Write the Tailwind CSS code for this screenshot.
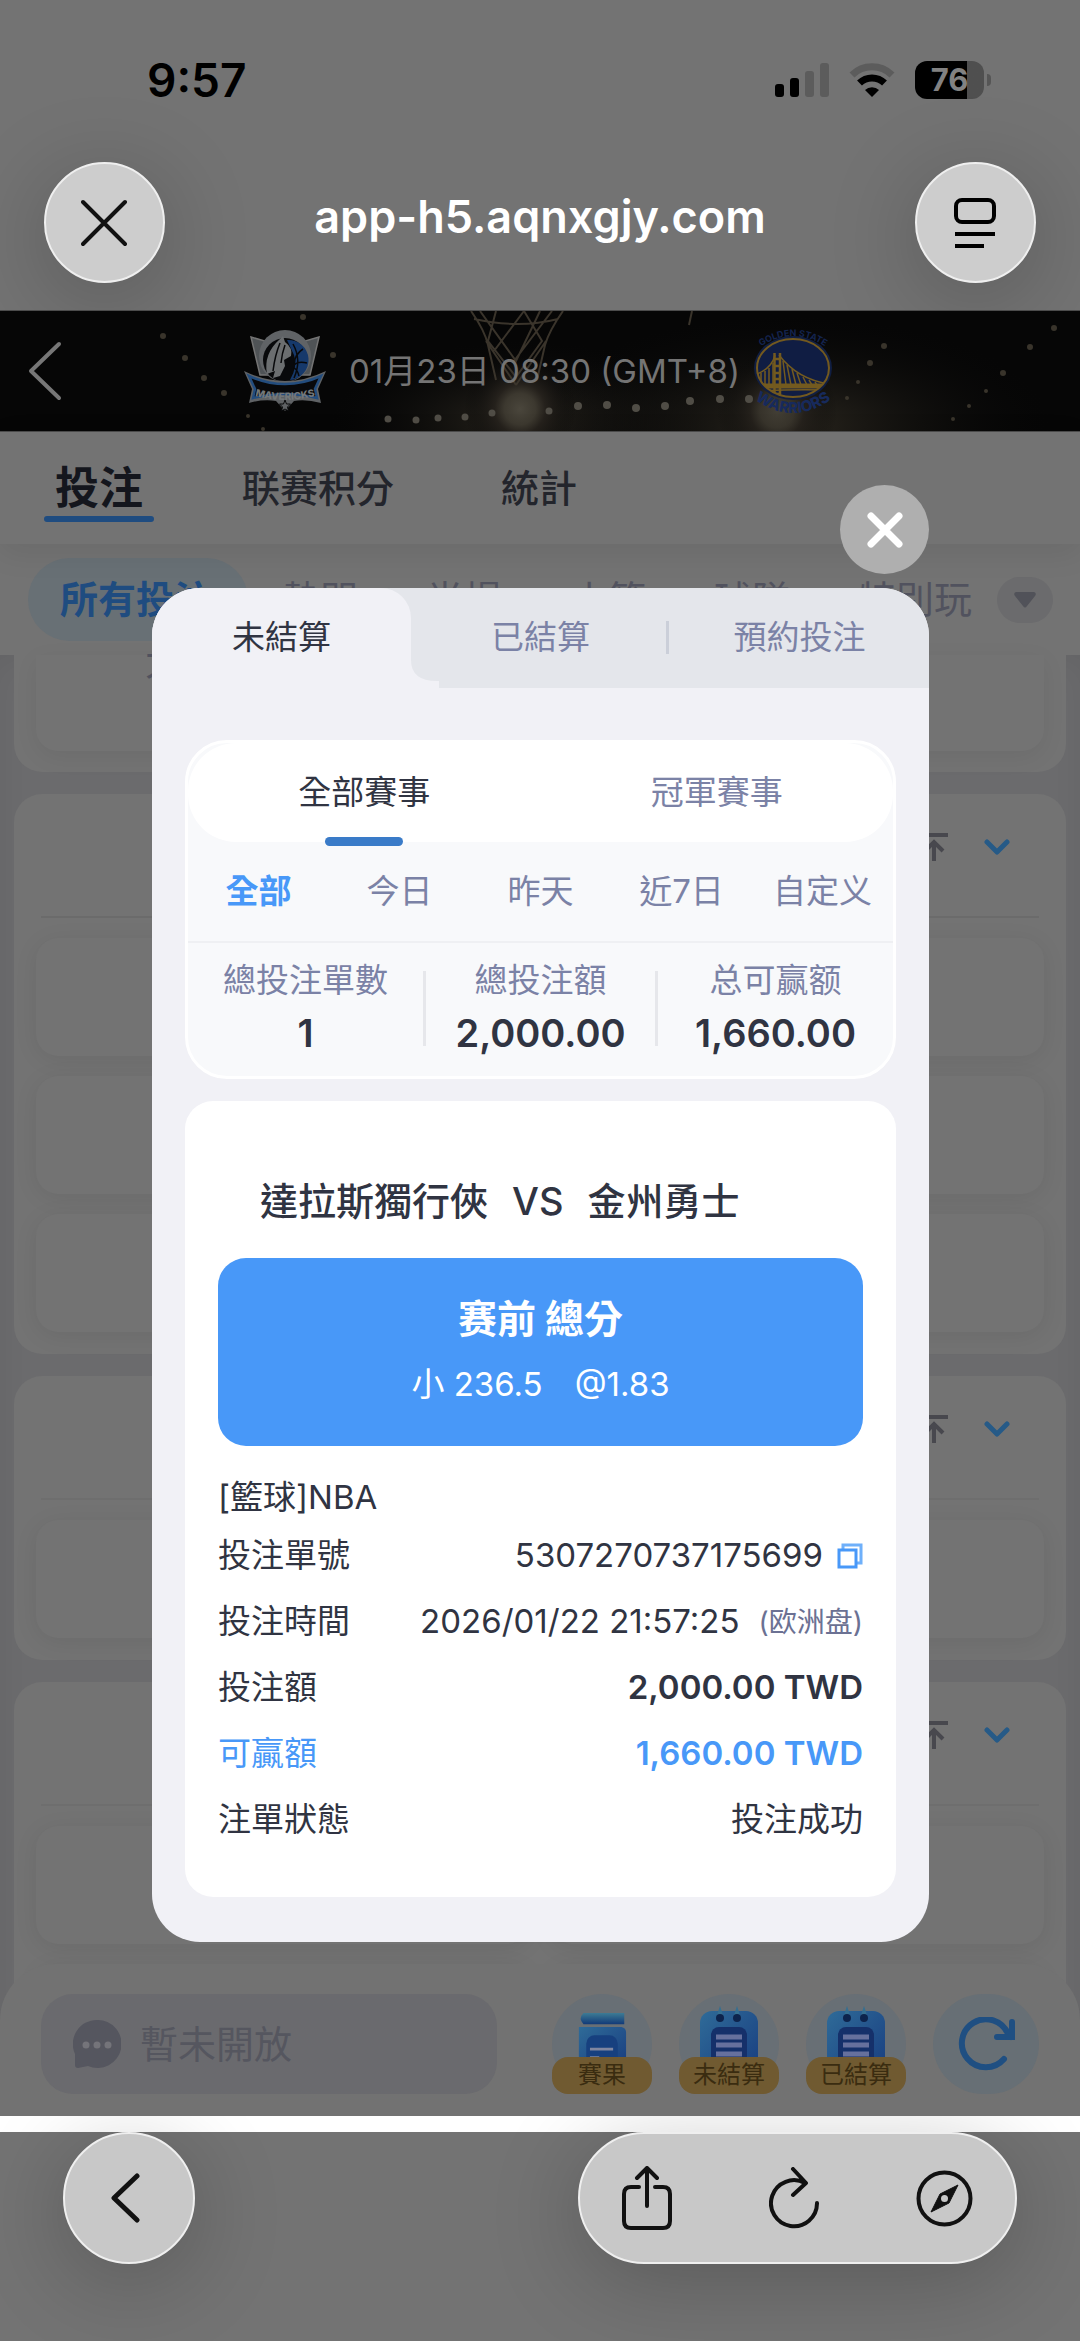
<!DOCTYPE html>
<html lang="zh-Hant">
<head>
<meta charset="utf-8">
<meta name="viewport" content="width=device-width, initial-scale=1">
<title>app-h5.aqnxgjy.com</title>
<script src="https://cdn.jsdelivr.net/npm/@tailwindcss/browser@4"></script>
</head>
<body class="relative min-h-screen overflow-x-hidden bg-[#737373] font-['Inter','Noto_Sans_CJK_TC',sans-serif] text-[33px] text-[#303442]">

<!-- Browser chrome, top -->
<header class="px-11 pt-[52px] pb-[27px]">
  <div class="flex h-14 items-center justify-between pr-[45px] pl-[103px]">
    <span class="text-[46px] leading-[56px] font-semibold text-black">9:57</span>
    <div class="flex items-center gap-5">
      <svg class="h-[34px] w-[54px]" viewBox="0 0 54 34" aria-hidden="true">
        <rect x="0" y="21" width="9" height="13" rx="3"/><rect x="15" y="15" width="9" height="19" rx="3"/>
        <rect x="30" y="8" width="9" height="26" rx="3" fill="#5c5c5c"/><rect x="45" y="0" width="9" height="34" rx="3" fill="#5c5c5c"/>
      </svg>
      <svg class="h-[34px] w-[46px]" viewBox="0 0 46 34" aria-hidden="true">
        <path d="M3 12a28.500 28.500 0 0 1 40 0" fill="none" stroke="#5c5c5c" stroke-width="7"/>
        <path d="M10.500 20a18 18 0 0 1 25 0" fill="none" stroke="#000" stroke-width="7"/>
        <path d="M16 27a10 10 0 0 1 14 0l-7 7z"/>
      </svg>
      <div class="flex items-center gap-[3px]">
        <div class="flex h-[38px] w-[69px] items-center justify-center rounded-[12px] bg-linear-to-r from-black from-75% to-[#4f4f4f] to-75% text-[31px] leading-[38px] font-bold text-[#828282]">76</div>
        <div class="h-3 w-[4px] rounded-r-full bg-[#555]"></div>
      </div>
    </div>
  </div>
  <div class="mt-[54px] flex items-center justify-between">
    <button class="flex size-[121px] items-center justify-center rounded-full border-2 border-[#efefef] bg-[#cdcdcd] shadow-[0_16px_90px_rgba(0,0,0,0.22)]" aria-label="關閉">
      <svg class="size-12" viewBox="0 0 48 48" fill="none" stroke="#111" stroke-width="4" stroke-linecap="round"><path d="M2 3l42 42M44 3L2 45"/></svg>
    </button>
    <h1 class="pb-3 text-[45px] leading-[56px] font-semibold text-white">app-h5.aqnxgjy.com</h1>
    <button class="flex size-[121px] items-center justify-center rounded-full border-2 border-[#efefef] bg-[#cdcdcd] shadow-[0_16px_90px_rgba(0,0,0,0.22)]" aria-label="閱讀模式">
      <svg class="h-[50px] w-[42px]" viewBox="0 0 42 50" fill="none" stroke="#000" stroke-width="4"><rect x="2" y="2" width="38" height="22" rx="6"/><path d="M1 36h40M1 48h29"/></svg>
    </button>
  </div>
</header>

<!-- Match banner -->
<section class="relative h-[122px] overflow-hidden border-y border-[#4c4c4c] bg-[#060606]">
  <svg class="absolute inset-0 size-full" viewBox="0 0 1080 120" preserveAspectRatio="xMidYMid slice" aria-hidden="true">
    <defs>
      <radialGradient id="lamp"><stop offset="0" stop-color="#4a463c"/><stop offset=".28" stop-color="#3c382f"/><stop offset=".45" stop-color="#25211c"/><stop offset="1" stop-color="#060606" stop-opacity="0"/></radialGradient>
      <radialGradient id="haze"><stop offset="0" stop-color="#2c2820"/><stop offset="1" stop-color="#090909" stop-opacity="0"/></radialGradient>
    </defs>
    <ellipse cx="520" cy="110" rx="190" ry="80" fill="url(#haze)"/>
    <ellipse cx="790" cy="115" rx="260" ry="110" fill="url(#haze)"/>
    <circle cx="520" cy="98" r="56" fill="url(#lamp)"/>
    <circle cx="777" cy="100" r="60" fill="url(#lamp)" opacity=".8"/>
    <g fill="none" stroke="#3a342b" stroke-width="2">
      <path d="M471 0q14 20 17 34l8 35M563 0q-14 20-18 34l-8 35M480 0l36 50 24-50M496 0l-8 30 28 36 26-36L524 0l-30 40M552 0l-38 50M474 8q45 10 84 0M486 30l30 44M546 30l-30 44"/>
    </g>
    <path d="M692 0l-3 14" stroke="#3a342b" stroke-width="2"/>
    <g fill="#504d46">
      <circle cx="388" cy="108" r="3.500"/><circle cx="416" cy="109" r="3.500"/><circle cx="438" cy="107" r="3.500"/><circle cx="465" cy="106" r="3.500"/><circle cx="492" cy="102" r="3.500"/><circle cx="549" cy="100" r="3.500"/><circle cx="578" cy="95" r="4"/><circle cx="607" cy="94" r="4"/><circle cx="636" cy="97" r="4"/><circle cx="665" cy="95" r="4"/><circle cx="690" cy="90" r="4"/><circle cx="720" cy="88" r="4"/><circle cx="749" cy="88" r="4"/>
    </g>
    <g fill="#39342b">
      <circle cx="303" cy="6" r="3"/><circle cx="163" cy="25" r="3"/><circle cx="185" cy="47" r="3"/><circle cx="204" cy="67" r="3"/><circle cx="224" cy="82" r="3"/><circle cx="333" cy="44" r="3"/><circle cx="248" cy="105" r="2"/><circle cx="263" cy="118" r="2"/>
      <circle cx="884" cy="35" r="3"/><circle cx="870" cy="52" r="3"/><circle cx="858" cy="71" r="2"/><circle cx="847" cy="87" r="2"/><circle cx="1054" cy="17" r="3"/><circle cx="1030" cy="36" r="3"/><circle cx="1003" cy="62" r="3"/><circle cx="986" cy="80" r="2"/><circle cx="969" cy="95" r="2"/><circle cx="953" cy="108" r="2"/>
    </g>
  </svg>
  <div class="relative flex h-full items-center justify-center">
    <a href="#" class="absolute left-7" aria-label="返回">
      <svg class="h-[60px] w-[36px]" viewBox="0 0 36 60" fill="none" stroke="#777" stroke-width="4" stroke-linecap="round" stroke-linejoin="round"><path d="M31 3L3 30l28 27"/></svg>
    </a>
    <svg class="mr-[22px] h-[84px] w-[84px]" viewBox="0 0 84 84" role="img" aria-label="Mavericks">
      <defs><path id="ribbon" d="M9 66Q42 76 75 66"/></defs>
      <path d="M8 8l14 4 7 34H17zM76 8l-14 4-7 34h12z" fill="#4f5356" stroke="#747474" stroke-width="1.500"/>
      <circle cx="42" cy="27" r="26" fill="#606366"/>
      <circle cx="42" cy="31" r="22" fill="#08090b"/>
      <path d="M44 11a20 20 0 0 1 3 40q8-14 4-25z" fill="#16396b"/>
      <path d="M50 15q9 16 1 34M60 20q-8 5-9 15M64 34q-9-2-13 2M56 47q-2-8-6-8" stroke="#08090b" stroke-width="1.500" fill="none"/>
      <path d="M37 10l3-3 2 6q8 6 6 14l-7 4 1 6-5 10-7 2 2-7-8 3q-4-20 13-35z" fill="#6b6e70"/>
      <path d="M37 14q-5 12-7 28M42 16q-3 8-4 18" stroke="#08090b" stroke-width="1.500" fill="none"/>
      <path d="M1 42q41 20 82 0l-8 18 3 14q-15-4-27-2l-9 10-9-10q-13-2-27 2l3-14z" fill="#5f6265"/>
      <path d="M6 47q36 16 72 0l-6 13 2 9q-32-8-64 0l2-9z" fill="#08090b" stroke="#234d7e" stroke-width="2.500"/>
      <text font-size="10" font-weight="800" fill="#74787a"><textPath href="#ribbon" startOffset="50%" text-anchor="middle">MAVERICKS</textPath></text>
      <path d="M42 71l1.500 4h4l-3 3 1 4-3.500-2-3.500 2 1-4-3-3h4z" fill="#5f6265" stroke="#08090b"/>
    </svg>
    <span class="text-[33px] leading-[44px] text-[#747474]">01月23日 08:30 (GMT+8)</span>
    <svg class="ml-[9px] h-[86px] w-[88px] overflow-visible" viewBox="0 0 88 86" role="img" aria-label="Golden State Warriors">
      <defs><path id="arcTop" d="M2 26Q44 -10 86 26"/><path id="arcBottom" d="M0 67Q44 103 88 67"/><clipPath id="disc"><ellipse cx="44" cy="40" rx="36" ry="29"/></clipPath></defs>
      <ellipse cx="44" cy="40" rx="39" ry="32" fill="#101e42"/>
      <ellipse cx="44" cy="40" rx="36" ry="29" fill="#101d43" stroke="#73591f" stroke-width="2"/>
      <g clip-path="url(#disc)" stroke="#735a1f" fill="none" stroke-width="1.500">
        <path d="M8 46q15-6 18-19M30 27q18 24 50 29"/>
        <path d="M24 35v22M20 40v17M16 43v14M12 45v12M34 33l3 24M38 37l4 20M43 41l4 16M48 45l4 12M54 49l4 8M60 52l3 5M66 54l2 3"/>
        <path d="M6 58h76" stroke-width="5"/><path d="M6 63q38-2 74-1"/>
        <path d="M25.500 25v46M31 25v46M25 31h7M25 38h7M25 45h7M25 51h7M25 66h7" stroke-width="2.500"/>
      </g>
      <text font-size="9" font-weight="700" fill="#142450"><textPath href="#arcTop" startOffset="50%" text-anchor="middle">GOLDEN STATE</textPath></text>
      <text font-size="15" font-weight="800" fill="#172a5c"><textPath href="#arcBottom" startOffset="50%" text-anchor="middle">WARRIORS</textPath></text>
    </svg>
  </div>
</section>

<!-- Section tabs -->
<nav class="relative flex h-28 items-center pl-11 text-[38px] font-medium text-[#23252c] shadow-[0_8px_30px_rgba(0,0,0,0.08)]">
  <a href="#" class="relative flex h-full w-[110px] items-center justify-center text-[44px] font-bold text-[#14161d]">投注<span class="absolute inset-x-0 bottom-[22px] h-[6px] rounded-full bg-[#1f4c80]"></span></a>
  <a href="#" class="ml-[88px]">联赛积分</a>
  <a href="#" class="ml-[107px]">統計</a>
</nav>
<div class="flex h-[111px] items-center justify-between pr-[27px] pl-7 text-[38px] text-[#51525e]">
  <div class="flex min-w-0 items-center overflow-hidden whitespace-nowrap">
    <button class="h-[83px] w-[220px] shrink-0 rounded-full bg-[#687075] pr-1 font-bold text-[#1f4c80]">所有投注</button>
    <div class="flex gap-[68px] pl-[34px]">
      <button>熱門</button><button>半場</button><button>小節</button><button>球隊</button><button>特別玩</button>
    </div>
  </div>
  <button class="ml-6 flex h-[46px] w-14 shrink-0 items-center justify-center rounded-full bg-[#6b6b6d]" aria-label="展開"><svg class="h-4 w-[22px]" viewBox="0 0 22 16" fill="#515259"><path d="M2 0h18q3 1 1 4l-8 10q-2 3-4 0L1 4q-2-3 1-4z"/></svg></button>
</div>

<!-- Market list -->
<main class="flex flex-col gap-[22px] bg-[#6b6b6d] px-[14px] text-[38px] text-[#51525e] shadow-[inset_0_10px_30px_rgba(0,0,0,0.06)]">
  <section class="rounded-b-[28px] bg-[#737373] px-[22px] pb-[21px]">
    <div class="flex h-24 rounded-b-[22px] px-[109px] shadow-[0_6px_24px_rgba(0,0,0,0.06)]"><span class="-mt-4 leading-[44px]">大</span></div>
  </section>

  <section class="rounded-[28px] bg-[#737373] px-[22px] pb-[22px]">
    <div class="mx-[5px] flex h-[124px] items-center justify-end gap-9 border-b-2 border-[#6b6b6b] pr-[29px] pb-4">
      <svg class="size-7" viewBox="0 0 28 28" fill="none" stroke="#48484e" stroke-width="4"><path d="M0 2h28M14 28V9M5 18l9-9 9 9"/></svg>
      <svg class="h-4 w-[26px]" viewBox="0 0 26 16" fill="none" stroke="#265a87" stroke-width="5" stroke-linecap="round" stroke-linejoin="round"><path d="M3 3l10 10L23 3"/></svg>
    </div>
    <div class="grid grid-cols-2 gap-5 pt-5">
      <div class="h-[118px] rounded-[22px] bg-[#737373] shadow-[0_4px_24px_rgba(0,0,0,0.07)]"></div><div class="h-[118px] rounded-[22px] bg-[#737373] shadow-[0_4px_24px_rgba(0,0,0,0.07)]"></div>
      <div class="h-[118px] rounded-[22px] bg-[#737373] shadow-[0_4px_24px_rgba(0,0,0,0.07)]"></div><div class="h-[118px] rounded-[22px] bg-[#737373] shadow-[0_4px_24px_rgba(0,0,0,0.07)]"></div>
      <div class="h-[118px] rounded-[22px] bg-[#737373] shadow-[0_4px_24px_rgba(0,0,0,0.07)]"></div><div class="h-[118px] rounded-[22px] bg-[#737373] shadow-[0_4px_24px_rgba(0,0,0,0.07)]"></div>
    </div>
  </section>

  <section class="rounded-[28px] bg-[#737373] px-[22px] pb-[22px]">
    <div class="mx-[5px] flex h-[124px] items-center justify-end gap-9 border-b-2 border-[#6e6e6e] pr-[29px] pb-4">
      <svg class="size-7" viewBox="0 0 28 28" fill="none" stroke="#48484e" stroke-width="4"><path d="M0 2h28M14 28V9M5 18l9-9 9 9"/></svg>
      <svg class="h-4 w-[26px]" viewBox="0 0 26 16" fill="none" stroke="#265a87" stroke-width="5" stroke-linecap="round" stroke-linejoin="round"><path d="M3 3l10 10L23 3"/></svg>
    </div>
    <div class="grid grid-cols-2 gap-5 pt-5">
      <div class="h-[118px] rounded-[22px] bg-[#737373] shadow-[0_4px_24px_rgba(0,0,0,0.07)]"></div><div class="h-[118px] rounded-[22px] bg-[#737373] shadow-[0_4px_24px_rgba(0,0,0,0.07)]"></div>
    </div>
  </section>

  <section class="rounded-t-[28px] bg-[#737373] px-[22px]">
    <div class="mx-[5px] flex h-[124px] items-center justify-end gap-9 border-b-2 border-[#6e6e6e] pr-[29px] pb-4">
      <svg class="size-7" viewBox="0 0 28 28" fill="none" stroke="#48484e" stroke-width="4"><path d="M0 2h28M14 28V9M5 18l9-9 9 9"/></svg>
      <svg class="h-4 w-[26px]" viewBox="0 0 26 16" fill="none" stroke="#265a87" stroke-width="5" stroke-linecap="round" stroke-linejoin="round"><path d="M3 3l10 10L23 3"/></svg>
    </div>
    <div class="grid grid-cols-2 gap-5 pt-5">
      <div class="h-[118px] rounded-[22px] bg-[#737373] shadow-[0_4px_24px_rgba(0,0,0,0.07)]"></div><div class="h-[118px] rounded-[22px] bg-[#737373] shadow-[0_4px_24px_rgba(0,0,0,0.07)]"></div>
      <div class="h-14 rounded-t-[22px] bg-[#737373] shadow-[0_4px_24px_rgba(0,0,0,0.07)]"></div><div class="h-14 rounded-t-[22px] bg-[#737373] shadow-[0_4px_24px_rgba(0,0,0,0.07)]"></div>
    </div>
  </section>
</main>

<!-- Page action bar -->
<footer class="relative -mt-14 flex items-start justify-between rounded-t-[56px] bg-[#727272] px-[41px] pt-[30px] pb-[22px]">
  <label class="flex h-[100px] w-[456px] items-center gap-[19px] rounded-[32px] bg-[#6a6a6e] pl-8">
    <svg class="size-12 shrink-0" viewBox="0 0 48 48" fill="#55565f"><path d="M24 0a24 24 0 1 1-9 46L5 48q-3 0-3-3V34A24 24 0 0 1 24 0z"/><g fill="#74747a"><circle cx="13" cy="25" r="3.500"/><circle cx="24" cy="25" r="3.500"/><circle cx="35" cy="25" r="3.500"/></g></svg>
    <input type="text" placeholder="暫未開放" class="w-full min-w-0 bg-transparent text-[38px] leading-[56px] outline-none placeholder:text-[#55565f]">
  </label>
  <div class="flex gap-[27px] text-[24px] leading-[36px] text-[#3a2c10]">
    <button class="relative size-[100px] rounded-full bg-[#686f75]">
      <svg class="absolute inset-x-0 top-[18px] mx-auto h-[54px] w-[50px]" viewBox="0 0 54 58"><defs><linearGradient id="b1" x1="0" y1="0" x2="1" y2="1"><stop offset="0" stop-color="#2f6b98"/><stop offset="1" stop-color="#183d80"/></linearGradient><linearGradient id="b2" x1="0" y1="0" x2="0" y2="1"><stop offset="0" stop-color="#3d7b94"/><stop offset="1" stop-color="#123a78"/></linearGradient></defs><path d="M7 1h44v12H7q-6-6 0-12z" fill="url(#b2)"/><path d="M2 16h46q5 1 5 6v36H2z" fill="url(#b1)"/><rect x="10" y="25" width="34" height="34" rx="9" fill="#17407f"/><path d="M14 40h25M14 49h10" stroke="#8086a0" stroke-width="3"/></svg>
      <span class="absolute inset-x-0 bottom-0 h-[37px] rounded-[16px] bg-[#705a31]">賽果</span>
    </button>
    <button class="relative size-[100px] rounded-full bg-[#686f75]">
      <svg class="absolute inset-x-0 top-3 mx-auto h-[58px] w-[60px]" viewBox="0 0 60 58"><rect x="1" y="5" width="58" height="64" rx="12" fill="url(#b1)"/><path d="M17 12l4-12 4 12zM34 12l4-12 4 12z" fill="#356f91"/><circle cx="21" cy="12" r="4" fill="#0d244d"/><circle cx="38" cy="12" r="4" fill="#0d244d"/><rect x="12" y="21" width="36" height="46" rx="8" fill="#15306a"/><path d="M17 31h26M17 39h26M17 48h26" stroke="#66709d" stroke-width="5"/></svg>
      <span class="absolute inset-x-0 bottom-0 h-[37px] rounded-[16px] bg-[#705a31]">未結算</span>
    </button>
    <button class="relative size-[100px] rounded-full bg-[#686f75]">
      <svg class="absolute inset-x-0 top-3 mx-auto h-[58px] w-[60px]" viewBox="0 0 60 58"><rect x="1" y="5" width="58" height="64" rx="12" fill="url(#b1)"/><path d="M17 12l4-12 4 12zM34 12l4-12 4 12z" fill="#356f91"/><circle cx="21" cy="12" r="4" fill="#0d244d"/><circle cx="38" cy="12" r="4" fill="#0d244d"/><rect x="12" y="21" width="36" height="46" rx="8" fill="#15306a"/><path d="M17 31h26M17 39h26M17 48h26" stroke="#66709d" stroke-width="5"/></svg>
      <span class="absolute inset-x-0 bottom-0 h-[37px] rounded-[16px] bg-[#705a31]">已結算</span>
    </button>
    <button class="flex h-[100px] w-[106px] items-center justify-center rounded-full bg-[#676f75]" aria-label="重新整理">
      <svg class="h-[54px] w-[58px]" viewBox="0 0 58 54" fill="none" stroke="#1f4f82" stroke-width="6" stroke-linecap="round"><path d="M47 42A24 24 0 1 1 51 17L54 20M55 5v15H40"/></svg>
    </button>
  </div>
</footer>
<div class="h-4 bg-white"></div>

<!-- Browser chrome, bottom -->
<nav class="flex justify-between px-[63px] pb-[77px]">
  <button class="flex size-[132px] items-center justify-center rounded-full border-2 border-[#efefef] bg-[#c8c8c8] pr-2 shadow-[0_16px_90px_rgba(0,0,0,0.22)]" aria-label="上一頁">
    <svg class="h-[50px] w-[30px]" viewBox="0 0 30 50" fill="none" stroke="#111" stroke-width="5" stroke-linecap="round" stroke-linejoin="round"><path d="M27 3L4 25l23 22"/></svg>
  </button>
  <div class="flex h-[132px] w-[439px] items-center justify-between rounded-full border-2 border-[#efefef] bg-[#c8c8c8] px-[42px] shadow-[0_16px_90px_rgba(0,0,0,0.22)]">
    <button aria-label="分享"><svg class="h-16 w-[50px]" viewBox="0 0 50 64" fill="none" stroke="#111" stroke-width="4" stroke-linecap="round" stroke-linejoin="round"><path d="M17 21h-8q-7 0-7 7v27q0 7 7 7h32q7 0 7-7V28q0-7-7-7h-8M25 40V2M15 12L25 2l10 10"/></svg></button>
    <button aria-label="重新載入"><svg class="h-[62px] w-[50px]" viewBox="0 0 50 62" fill="none" stroke="#111" stroke-width="4" stroke-linecap="round" stroke-linejoin="round"><path d="M48 36A23 23 0 1 1 36 16M24 2l13 14-13 12"/></svg></button>
    <button aria-label="瀏覽器"><svg class="size-[57px]" viewBox="0 0 57 57" fill="none" stroke="#111" stroke-width="4"><circle cx="28.500" cy="28.500" r="26"/><path d="M42 15L33 33 15 42l9-18z" fill="#111" stroke-width="1" stroke-linejoin="round"/><circle cx="28.500" cy="28.500" r="3.500" fill="#c8c8c8" stroke="none"/></svg></button>
  </div>
</nav>

<!-- Bet records dialog -->
<div class="absolute inset-x-0 top-0 flex flex-col pt-[485px] pr-[151px] pl-[152px]">
  <button class="flex size-[89px] items-center justify-center self-end rounded-full bg-[#afafaf]" aria-label="關閉">
    <svg class="size-9" viewBox="0 0 36 36" fill="none" stroke="#fff" stroke-width="7" stroke-linecap="round"><path d="M4 4l28 28M32 4L4 32"/></svg>
  </button>
  <div role="dialog" aria-label="投注記錄" class="mt-[14px] overflow-hidden rounded-[48px] bg-[#f1f1f6] pb-[45px]">
    <div class="grid h-[100px] grid-cols-3 bg-[#e4e6eb] text-[#7b82a6]">
      <button class="relative rounded-tr-[30px] bg-[#f1f1f6] text-[#303442]">未結算
        <svg class="absolute top-[72px] left-full size-7 fill-[#f1f1f6]" viewBox="0 0 28 28"><path d="M0 0q0 21 26 21h2v7H0z"/></svg>
      </button>
      <button>已結算</button>
      <button class="relative"><span class="absolute top-[33px] -left-1 h-[33px] w-[3px] bg-[#cbcfd9]"></span>預約投注</button>
    </div>

    <section class="mx-[33px] mt-[52px] rounded-[42px] border-[3px] border-white bg-[#f8f9fb] text-[#7b82a6]">
      <div class="grid h-[99px] grid-cols-2 rounded-[48px] bg-white">
        <button class="relative text-[#303442]">全部賽事<span class="absolute -bottom-1 left-1/2 h-[9px] w-[78px] -translate-x-1/2 rounded-full bg-[#3a7bc8]"></span></button>
        <button>冠軍賽事</button>
      </div>
      <div class="grid h-[101px] grid-cols-5 border-b-2 border-[#eff0f3]">
        <button class="font-bold text-[#4898f8]">全部</button><button>今日</button><button>昨天</button><button>近7日</button><button>自定义</button>
      </div>
      <dl class="grid h-[133px] grid-cols-3 items-center pb-[5px] text-center">
        <div class="flex flex-col gap-[10px]"><dt class="leading-[42px]">總投注單數</dt><dd class="text-[38px] leading-[44px] font-semibold text-[#303442]">1</dd></div>
        <div class="relative flex flex-col gap-[10px]">
          <dt class="leading-[42px]">總投注額</dt><dd class="text-[38px] leading-[44px] font-semibold text-[#303442]">2,000.00</dd>
          <span class="absolute inset-x-0 top-3 h-[75px] border-x-[3px] border-[#e6e7eb]"></span>
        </div>
        <div class="flex flex-col gap-[10px]"><dt class="leading-[42px]">总可赢额</dt><dd class="text-[38px] leading-[44px] font-semibold text-[#303442]">1,660.00</dd></div>
      </dl>
    </section>

    <article class="mx-[33px] mt-[22px] rounded-[28px] bg-white px-[33px] pt-[72px] pb-[44px]">
      <h2 class="flex gap-6 pl-[42px] text-[38px] leading-[56px] font-medium"><span>達拉斯獨行俠</span><span>VS</span><span>金州勇士</span></h2>
      <div class="mt-[29px] rounded-[28px] bg-[#4898f8] pt-[33px] pb-[40px] text-center text-white">
        <p class="text-[39px] leading-[56px] font-bold">赛前 總分</p>
        <p class="mt-[15px] flex justify-center gap-[32px] leading-[44px]"><span>小 236.5</span><span>@1.83</span></p>
      </div>
      <p class="mt-[29px] leading-[44px]">[籃球]NBA</p>
      <dl class="mt-[4px]">
        <div class="flex h-[66px] items-center justify-between"><dt>投注單號</dt><dd class="flex items-center gap-[14px]">5307270737175699<button aria-label="複製"><svg class="block size-[26px]" viewBox="0 0 26 26" fill="none" stroke="#4898f8" stroke-width="3"><path d="M6 6V2h18v18h-5" stroke="#6fb0fa"/><rect x="2" y="7" width="17" height="17" fill="#fff"/></svg></button></dd></div>
        <div class="flex h-[66px] items-center justify-between"><dt>投注時間</dt><dd class="flex items-center gap-[19px]">2026/01/22 21:57:25<span class="text-[28px] text-[#6b7193]">(欧洲盘)</span></dd></div>
        <div class="flex h-[66px] items-center justify-between"><dt>投注額</dt><dd class="font-semibold">2,000.00 TWD</dd></div>
        <div class="flex h-[66px] items-center justify-between text-[#4898f8]"><dt>可贏額</dt><dd class="font-semibold">1,660.00 TWD</dd></div>
        <div class="flex h-[66px] items-center justify-between"><dt>注單狀態</dt><dd>投注成功</dd></div>
      </dl>
    </article>
  </div>
</div>
</body>
</html>
